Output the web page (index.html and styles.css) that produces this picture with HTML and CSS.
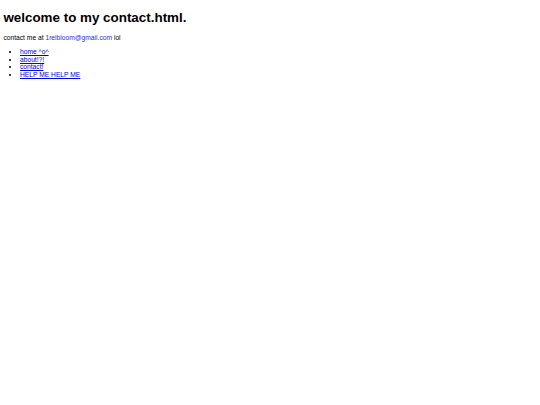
FILE: index.html
```html
<!DOCTYPE html>
<html lang="en">
<head>
    <meta charset="UTF-8">
    <title>contact</title>
    <link rel="stylesheet" href="styles.css">
</head>
<body>
    <h1>welcome to my contact.html.</h1>
    <p>contact me at <a href="mailto:1reibloom@gmail.com" class="email">1reibloom@gmail.com</a> lol</p>
    <ul class="nav">
        <li><a href="index.html">home ^o^</a></li>
        <li><a href="about.html">about!?!</a></li>
        <li><a href="contact.html">contact!</a></li>
        <li><a href="help.html">HELP ME HELP ME</a></li>
    </ul>
</body>
</html>
```

FILE: styles.css
```css
body {
    font-family: "Liberation Sans", Arial, sans-serif;
    font-size: 6.7px;
    line-height: 7.6px;
    margin: 3.4px;
    background-color: white;
    color: black;
}
h1 {
    font-size: 13.4px;
    line-height: 15px;
    margin: 6.5px 0 9px;
}
p {
    margin: 6.6px 0;
}
.email {
    color: #2a2aee;
    text-decoration: none;
}
.nav {
    margin: 6.7px 0;
    padding-left: 16.6px;
}
.nav a {
    color: #0000ee;
}
```
